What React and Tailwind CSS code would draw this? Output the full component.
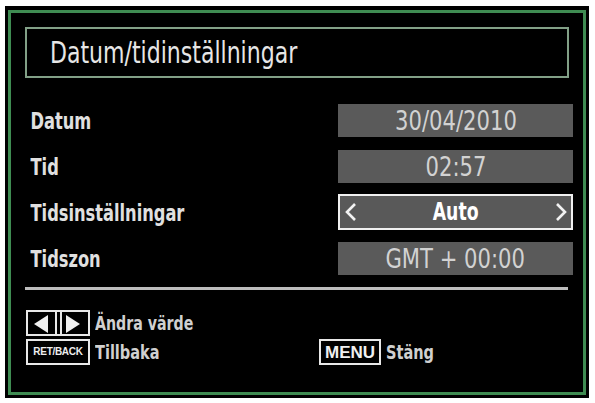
import React from "react";

const narrow = "font-['Liberation_Sans_Narrow','DejaVu_Sans_Condensed',sans-serif]";

const rows = [
  { label: "Datum", value: "30/04/2010" },
  { label: "Tid", value: "02:57" },
  { label: "Tidsinställningar", value: "Auto", selected: true },
  { label: "Tidszon", value: "GMT + 00:00" },
];

const Chevron = ({ dir }) => (
  <svg width="12" height="18" viewBox="0 0 12 18" className="shrink-0">
    <path
      d={dir === "left" ? "M10 1 L2 9 L10 17" : "M2 1 L10 9 L2 17"}
      fill="none"
      stroke="#f2f2f2"
      strokeWidth="2.6"
      strokeLinejoin="miter"
    />
  </svg>
);

const ArrowsKey = () => (
  <svg width="64" height="26" viewBox="0 0 64 26" className="shrink-0">
    <rect x="1" y="1" width="62" height="24" fill="none" stroke="#e8e8e8" strokeWidth="2" />
    <line x1="30" y1="1" x2="30" y2="25" stroke="#e8e8e8" strokeWidth="2" />
    <line x1="35" y1="1" x2="35" y2="25" stroke="#e8e8e8" strokeWidth="2" />
    <polygon points="8,14 22,5 22,23" fill="#f0f0f0" />
    <polygon points="54,14 40,5 40,23" fill="#f0f0f0" />
  </svg>
);

const App = () => {
  return (
    <div className="w-[595px] h-[403px] bg-white pt-[6px] pl-[5px]">
      <div className="w-[584px] h-[392px] bg-black p-[3px] pt-[4px]">
        <div className="h-full border-[3px] border-[#3f8c52] pl-[14px] pr-[10px] pt-[14px]">
          {/* title */}
          <div className="h-[51px] mr-[4px] border-2 border-[#82a087] flex items-center pl-[23px]">
            <span className={`${narrow} inline-block origin-left scale-x-[0.79] text-[31px] leading-none text-[#e6e6e6]`}>
              Datum/tidinställningar
            </span>
          </div>

          {/* settings rows */}
          <div className="mt-[19px]">
            {rows.map((row) => (
              <div key={row.label} className="h-[46px] flex items-center">
                <span className={`${narrow} inline-block origin-left scale-x-[0.785] pl-[7px] pt-[3px] text-[23px] font-bold leading-none text-[#e0e0e0]`}>
                  {row.label}
                </span>
                {row.selected ? (
                  <div className="ml-auto w-[235px] h-[36px] bg-[#595959] border-[2.5px] border-[#f0f0f0] flex items-center justify-between pl-[5px] pr-[4px]">
                    <Chevron dir="left" />
                    <span className={`${narrow} inline-block scale-x-[0.8] text-[24px] font-bold leading-none text-white`}>{row.value}</span>
                    <Chevron dir="right" />
                  </div>
                ) : (
                  <div className="ml-auto w-[235px] h-[33px] bg-[#5a5a5a] flex items-center justify-center">
                    <span className={`${narrow} inline-block scale-x-[0.87] text-[27px] leading-none text-[#d2d2d2]`}>{row.value}</span>
                  </div>
                )}
              </div>
            ))}
          </div>

          <div className="mt-[6px] mr-[5px] h-[3px] bg-[#bdbdbd]" />

          {/* legend */}
          <div className="mt-[20px] flex flex-col gap-[3px]">
            <div className="h-[26px] flex items-center gap-[5px] pl-[1px]">
              <ArrowsKey />
              <span className={`${narrow} inline-block origin-left scale-x-[0.83] text-[19px] font-bold leading-none text-[#d0d0d0]`}>Ändra värde</span>
            </div>
            <div className="h-[26px] flex items-center pl-[1px]">
              <div className="w-[293px] flex items-center">
                <div className="w-[64px] h-[26px] border-2 border-[#e8e8e8] flex items-center justify-center">
                  <span className="font-['Liberation_Sans',sans-serif] text-[10px] font-bold leading-none text-[#eeeeee] tracking-[-0.3px]">
                    RET/BACK
                  </span>
                </div>
                <span className={`${narrow} inline-block origin-left scale-x-[0.85] ml-[5px] text-[19px] font-bold leading-none text-[#d0d0d0]`}>Tillbaka</span>
              </div>
              <div className="w-[62px] h-[26px] border-2 border-[#e8e8e8] flex items-center justify-center">
                <span className="font-['Liberation_Sans',sans-serif] text-[17px] font-bold leading-none text-[#f0f0f0]">
                  MENU
                </span>
              </div>
              <span className={`${narrow} inline-block origin-left scale-x-[0.85] ml-[5px] text-[19px] font-bold leading-none text-[#d0d0d0]`}>Stäng</span>
            </div>
          </div>
        </div>
      </div>
    </div>
  );
};

export default App;
